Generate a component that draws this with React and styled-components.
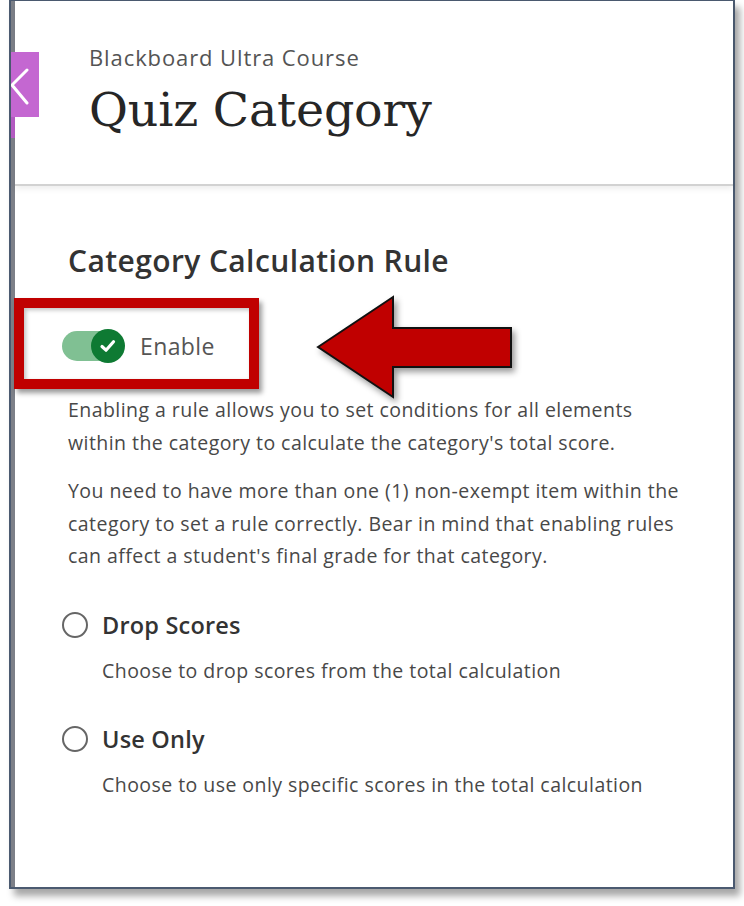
import React from "react";
import styled, { createGlobalStyle } from "styled-components";

const Global = createGlobalStyle`
  html, body { margin: 0; padding: 0; background: #ffffff; }
  body { font-family: "Open Sans", "Noto Sans", sans-serif; }
  #root { width: 744px; height: 906px; position: relative; overflow: hidden; }
`;

const Page = styled.div`
  position: relative;
  width: 744px;
  height: 906px;
  padding: 0 0 0 9px;
  box-sizing: border-box;
`;

const Frame = styled.div`
  width: 726px;
  height: 889px;
  box-sizing: border-box;
  border: 2px solid #4b5a70;
  border-top-width: 1px;
  background: #ffffff;
  box-shadow: 5px 7px 7px rgba(0, 0, 0, 0.35);
  display: flex;
  position: relative;
`;

const SideStrip = styled.div`
  width: 4px;
  flex: none;
  background: linear-gradient(
    to bottom,
    #7d8088 0,
    #7d8088 52px,
    #b65cc4 52px,
    #b65cc4 137px,
    #7d8088 137px
  );
`;

const Main = styled.div`
  flex: 1;
  display: flex;
  flex-direction: column;
`;

const Header = styled.header`
  height: 185px;
  box-sizing: border-box;
  padding: 41px 0 0 74px;
  border-bottom: 2px solid #d2d2d2;
  box-shadow: 0 3px 6px rgba(0, 0, 0, 0.07);
`;

const CourseName = styled.div`
  font-size: 22px;
  line-height: 30px;
  color: #545454;
  letter-spacing: 0.9px;
`;

const Title = styled.h1`
  margin: 9px 0 0 0;
  font-family: "DejaVu Serif", "Liberation Serif", serif;
  font-weight: 400;
  font-size: 47.5px;
  line-height: 58px;
  color: #262626;
  letter-spacing: -0.2px;
`;

const Content = styled.section`
  padding: 57px 0 0 53px;
  display: flex;
  flex-direction: column;
`;

const Heading = styled.h2`
  margin: 0;
  font-size: 30px;
  line-height: 36px;
  font-weight: 600;
  color: #333333;
  letter-spacing: 0.4px;
`;

const ToggleRow = styled.div`
  margin-top: 51px;
  display: flex;
  align-items: center;
  height: 32px;
  margin-left: -6px;
`;

const Track = styled.div`
  position: relative;
  width: 62px;
  height: 30px;
  border-radius: 15px;
  background: #80c093;
  flex: none;
`;

const Knob = styled.div`
  position: absolute;
  right: -1px;
  top: -2px;
  width: 34px;
  height: 34px;
  border-radius: 50%;
  background: #0e7a33;
  display: flex;
  align-items: center;
  justify-content: center;
`;

const ToggleLabel = styled.span`
  margin-left: 16px;
  font-size: 23px;
  color: #555555;
  letter-spacing: 0.4px;
`;

const Para = styled.p`
  margin: ${(p) => p.$top}px 0 0 0;
  font-size: 19.5px;
  line-height: 32.5px;
  color: #484848;
  letter-spacing: 0.45px;
  max-width: 625px;
`;

const Option = styled.div`
  margin-top: ${(p) => p.$top}px;
  display: flex;
  flex-direction: column;
`;

const OptionHead = styled.div`
  display: flex;
  align-items: center;
  margin-left: -6px;
  height: 32px;
`;

const Radio = styled.span`
  width: 22px;
  height: 22px;
  border-radius: 50%;
  border: 2px solid #666666;
  flex: none;
`;

const OptionLabel = styled.span`
  margin-left: 14px;
  font-size: 23.5px;
  font-weight: 600;
  color: #333333;
  letter-spacing: 0.2px;
`;

const OptionDesc = styled.div`
  margin: 14px 0 0 34px;
  font-size: 19.5px;
  line-height: 32px;
  color: #484848;
  letter-spacing: 0.45px;
`;

const BackButton = styled.div`
  position: absolute;
  left: 11px;
  top: 52px;
  width: 28px;
  height: 65px;
  background: #c467d1;
  overflow: hidden;
`;

const Highlight = styled.div`
  position: absolute;
  left: 14px;
  top: 298px;
  width: 245px;
  height: 91px;
  box-sizing: border-box;
  border: 10px solid #c00000;
  box-shadow: 3px 4px 5px rgba(0, 0, 0, 0.4), inset 2px 2px 4px rgba(0, 0, 0, 0.25);
  pointer-events: none;
`;

const ArrowSvg = styled.svg`
  position: absolute;
  left: 310px;
  top: 290px;
  overflow: visible;
  filter: drop-shadow(3px 4px 3px rgba(0, 0, 0, 0.4));
`;

export default function App() {
  return (
    <>
      <Global />
      <Page>
        <Frame>
          <SideStrip />
          <Main>
            <Header>
              <CourseName>Blackboard Ultra Course</CourseName>
              <Title>Quiz Category</Title>
            </Header>
            <Content>
              <Heading>Category Calculation Rule</Heading>
              <ToggleRow>
                <Track>
                  <Knob>
                    <svg width="20" height="20" viewBox="0 0 20 20">
                      <path
                        d="M4 10.5 L8 14.2 L15.5 5.8"
                        fill="none"
                        stroke="#ffffff"
                        strokeWidth="3.2"
                        strokeLinecap="round"
                        strokeLinejoin="round"
                      />
                    </svg>
                  </Knob>
                </Track>
                <ToggleLabel>Enable</ToggleLabel>
              </ToggleRow>
              <Para $top={32}>
                Enabling a rule allows you to set conditions for all elements
                within the category to calculate the category's total score.
              </Para>
              <Para $top={16}>
                You need to have more than one (1) non-exempt item within the
                category to set a rule correctly. Bear in mind that enabling
                rules can affect a student's final grade for that category.
              </Para>
              <Option $top={36}>
                <OptionHead>
                  <Radio />
                  <OptionLabel>Drop Scores</OptionLabel>
                </OptionHead>
                <OptionDesc>Choose to drop scores from the total calculation</OptionDesc>
              </Option>
              <Option $top={36}>
                <OptionHead>
                  <Radio />
                  <OptionLabel>Use Only</OptionLabel>
                </OptionHead>
                <OptionDesc>Choose to use only specific scores in the total calculation</OptionDesc>
              </Option>
            </Content>
          </Main>
        </Frame>
        <BackButton>
          <svg width="28" height="65" viewBox="0 0 28 65">
            <path
              d="M16 18 L1 33 L16 51"
              fill="none"
              stroke="#ffffff"
              strokeWidth="3"
              strokeLinecap="round"
              strokeLinejoin="round"
            />
          </svg>
        </BackButton>
        <Highlight />
        <ArrowSvg width="210" height="115" viewBox="0 0 210 115">
          <path
            d="M8 57 L83 7 L83 38 L201 38 L201 77 L83 77 L83 107 Z"
            fill="#c00000"
            stroke="#111111"
            strokeWidth="2"
            strokeLinejoin="miter"
          />
        </ArrowSvg>
      </Page>
    </>
  );
}
